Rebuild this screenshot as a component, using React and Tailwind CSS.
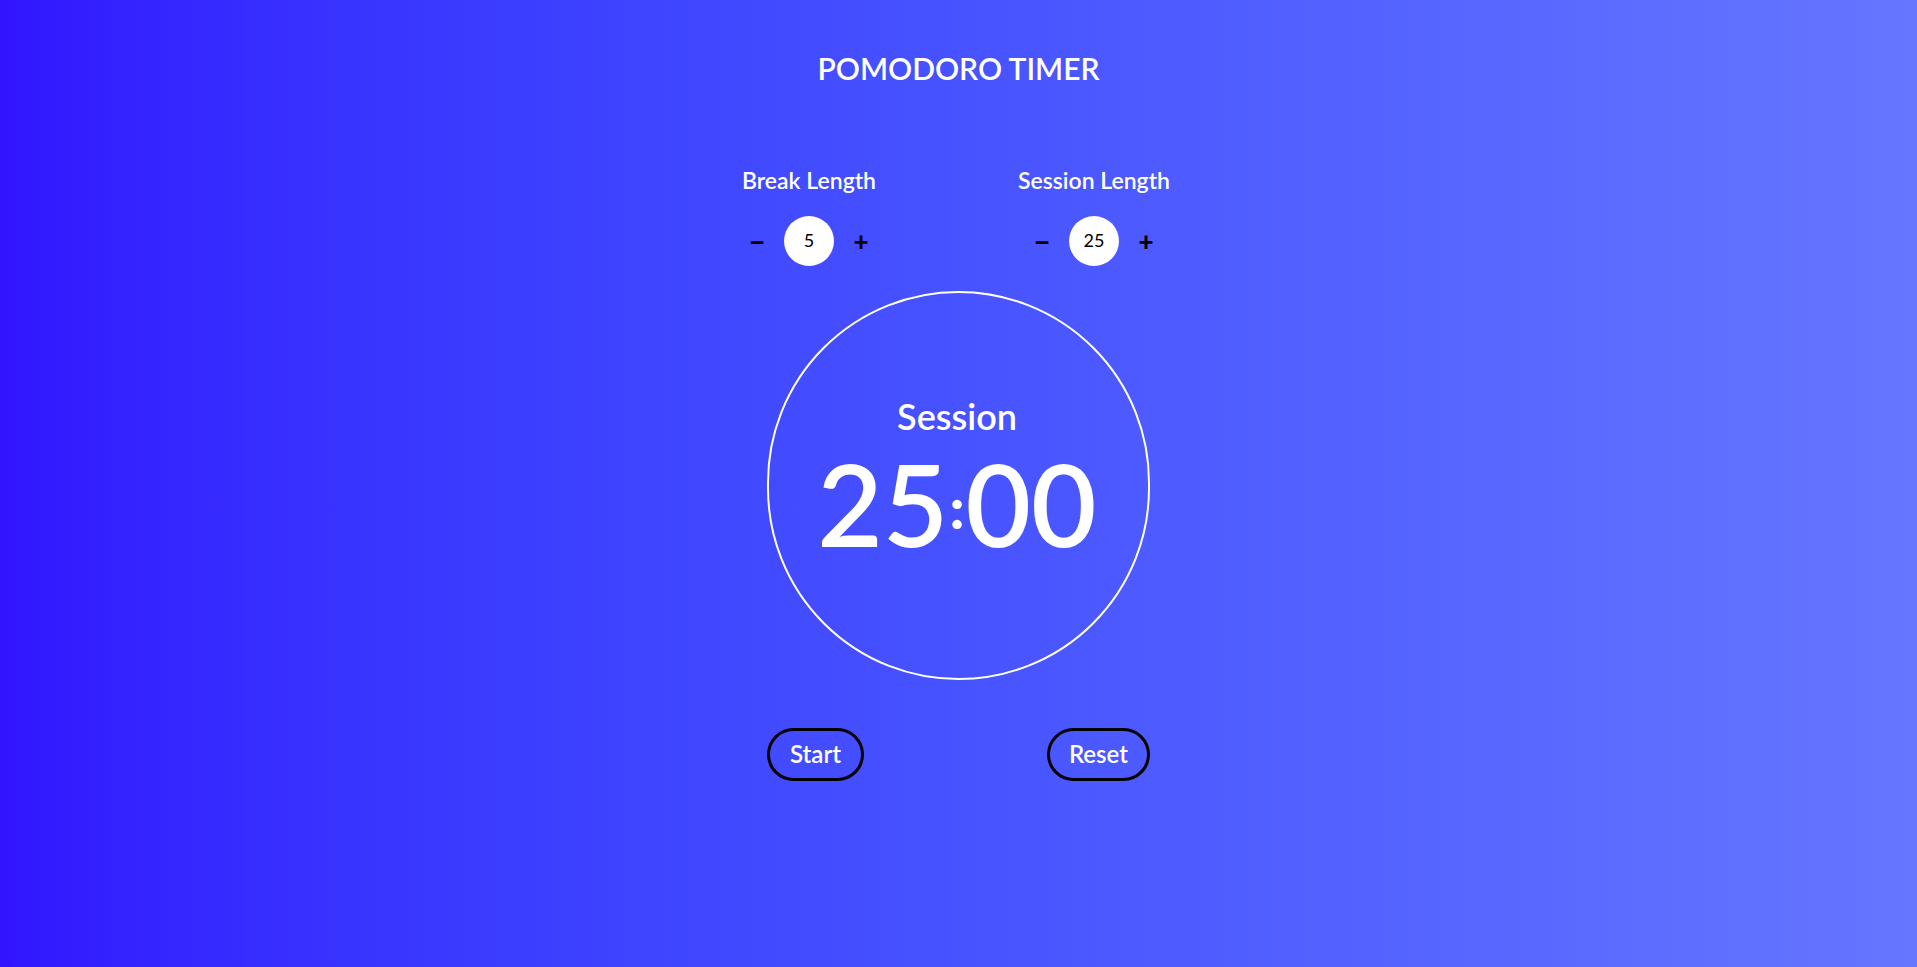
import { useState } from "react";

const font = { fontFamily: "Lato, 'Open Sans', sans-serif" };

const LengthControl = ({ label, value, onDec, onInc }) => (
  <div className="flex flex-col items-center w-[200px]">
    <h2 className="mt-[1px] text-[23px] leading-[1.2] font-semibold text-white">{label}</h2>
    <div className="flex items-center gap-[15px] mt-[21px]">
      <button onClick={onDec} className="w-[24px] text-[28px] leading-none font-black text-black">
        −
      </button>
      <div className="w-[50px] h-[50px] rounded-full bg-white flex items-center justify-center text-[18px] text-black">
        {value}
      </div>
      <button onClick={onInc} className="w-[24px] text-[26px] leading-none font-black text-black">
        +
      </button>
    </div>
  </div>
);

export default function App() {
  const [breakLen, setBreakLen] = useState(5);
  const [sessionLen, setSessionLen] = useState(25);

  const clamp = (v) => Math.min(60, Math.max(1, v));
  const minutes = String(sessionLen).padStart(2, "0");

  return (
    <div
      style={font}
      className="min-h-screen w-full bg-gradient-to-r from-[#3214ff] to-[#6676ff] flex flex-col items-center"
    >
      <h1 className="mt-[50px] text-[30px] leading-[1.2] font-semibold text-white">
        POMODORO TIMER
      </h1>

      {/* Length controls */}
      <div className="flex gap-[85px] mt-[80px] pr-[14px]">
        <LengthControl
          label="Break Length"
          value={breakLen}
          onDec={() => setBreakLen(clamp(breakLen - 1))}
          onInc={() => setBreakLen(clamp(breakLen + 1))}
        />
        <LengthControl
          label="Session Length"
          value={sessionLen}
          onDec={() => setSessionLen(clamp(sessionLen - 1))}
          onInc={() => setSessionLen(clamp(sessionLen + 1))}
        />
      </div>

      {/* Timer circle */}
      <div className="mt-[25px] w-[383px] h-[389px] rounded-full border-2 border-white flex flex-col items-center pt-[102px] pr-[3px]">
        <div className="text-[36px] leading-[1.2] font-semibold text-white">Session</div>
        <div className="text-[113px] leading-[1.2] font-semibold text-white -mt-[2px]">
          <span>{minutes}</span>
          <span className="text-[58px] font-black align-[18px] mx-[1px]">:</span>
          <span>00</span>
        </div>
      </div>

      {/* Controls */}
      <div className="mt-[48px] w-[383px] flex justify-between">
        <button className="h-[53px] px-[20px] rounded-full border-[3px] border-black text-[24px] font-semibold text-white">
          Start
        </button>
        <button className="h-[53px] px-[19px] rounded-full border-[3px] border-black text-[24px] font-semibold text-white">
          Reset
        </button>
      </div>
    </div>
  );
}
